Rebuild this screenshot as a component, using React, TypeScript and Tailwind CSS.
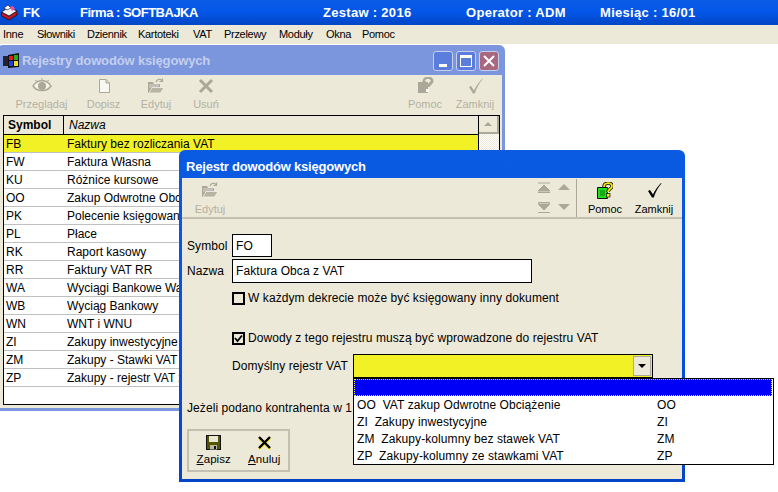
import { ReactNode } from "react";

const ROWS = [
  ["FB", "Faktury bez rozliczania VAT"],
  ["FW", "Faktura Własna"],
  ["KU", "Różnice kursowe"],
  ["OO", "Zakup Odwrotne Obciążenie"],
  ["PK", "Polecenie księgowania"],
  ["PL", "Płace"],
  ["RK", "Raport kasowy"],
  ["RR", "Faktury VAT RR"],
  ["WA", "Wyciągi Bankowe Walutowe"],
  ["WB", "Wyciąg Bankowy"],
  ["WN", "WNT i WNU"],
  ["ZI", "Zakupy inwestycyjne"],
  ["ZM", "Zakupy - Stawki VAT"],
  ["ZP", "Zakupy - rejestr VAT z"],
];

const MENU = ["Inne", "Słowniki", "Dziennik", "Kartoteki", "VAT", "Przelewy", "Moduły", "Okna", "Pomoc"];

const OPTIONS = [
  ["OO  VAT zakup Odwrotne Obciążenie", "OO"],
  ["ZI  Zakupy inwestycyjne", "ZI"],
  ["ZM  Zakupy-kolumny bez stawek VAT", "ZM"],
  ["ZP  Zakupy-kolumny ze stawkami VAT", "ZP"],
];

function EyeIcon() {
  return (
    <svg width="20" height="18" viewBox="0 0 20 18">
      <path d="M1 9 C5 2 15 2 19 9 C15 15 5 15 1 9Z" fill="#f5f3ea" stroke="#aca899" strokeWidth="1.5" />
      <circle cx="10" cy="9" r="4" fill="#aca899" />
      <path d="M3 3 L6 5 M10 1 V3 M17 3 L14 5" stroke="#aca899" />
    </svg>
  );
}

function PageIcon() {
  return (
    <svg width="14" height="16" viewBox="0 0 14 16">
      <path d="M2.5 1.5 H9 L12.5 5 V14.5 H2.5Z M9 1.5 V5 H12.5" fill="#f8f7f1" stroke="#aca899" />
    </svg>
  );
}

function FolderIcon() {
  return (
    <svg width="18" height="16" viewBox="0 0 18 16">
      <path d="M1 4 H6 L7 6 H13 V15 H1Z" fill="#aca899" />
      <path d="M2 7 H12 M2 9 H12" stroke="#f8f7f1" strokeWidth="0.6" />
      <path d="M2 15 L5 9.5 H17 L13.5 15Z" fill="#b8b4a4" stroke="#f8f7f1" strokeWidth="0.7" />
      <path d="M9 4 C10 1 13 0.5 15 2.5 M15.5 0.5 V3.5 H12.5" fill="none" stroke="#aca899" strokeWidth="1.2" />
    </svg>
  );
}

function CrossIcon({ color }: { color: string }) {
  return (
    <svg width="16" height="16" viewBox="0 0 16 16">
      <path d="M2 2 L14 14 M14 2 L2 14" stroke={color} strokeWidth="3" />
    </svg>
  );
}

function HelpDisabled() {
  return (
    <svg width="17" height="17" viewBox="0 0 17 17">
      <path d="M1 5 H11 V16 H1Z" fill="#aca899" />
      <path d="M7 5 C7 0 15 0 15 4 C15 7 11 7 11 10" fill="none" stroke="#aca899" strokeWidth="3" />
      <path d="M8 4 C9 2 13 2 13.5 4" fill="none" stroke="#f8f7f1" />
      <rect x="9" y="12" width="3" height="3" fill="#f8f7f1" />
    </svg>
  );
}

function HelpIcon() {
  return (
    <svg width="16" height="17" viewBox="0 0 16 17">
      <path d="M0.5 5.5 H10.5 V16.5 H0.5Z" fill="#22dd22" stroke="#111" />
      <path d="M3 9 H8 M3 11 H8 M3 13 H8" stroke="#0a7a0a" />
      <path d="M7 5 C7 0 15 0 15 4 C15 7 11 7 11 10" fill="none" stroke="#111" strokeWidth="3.4" />
      <path d="M7 5 C7 0 15 0 15 4 C15 7 11 7 11 10" fill="none" stroke="#f6e80c" strokeWidth="1.8" />
      <rect x="9.5" y="11.5" width="3.5" height="3.5" fill="#f6e80c" stroke="#111" strokeWidth="0.7" />
    </svg>
  );
}

function CheckMark({ color }: { color: string }) {
  return (
    <svg width="15" height="16" viewBox="0 0 15 16">
      <path d="M1 9 L3 8 L6 12.5 C8 8 11 4 14 1 L14.5 1.5 C11 5.5 8.5 10 6.8 15.5 H5 Z" fill={color} />
    </svg>
  );
}

function SaveIcon() {
  return (
    <svg width="15" height="15" viewBox="0 0 15 15">
      <rect x="0.5" y="0.5" width="14" height="14" fill="#555500" stroke="#111" />
      <rect x="3" y="1" width="9" height="6" fill="#e8e8d8" />
      <rect x="4" y="10" width="7" height="4.5" fill="#b8b8a8" />
      <rect x="8" y="11" width="2" height="3" fill="#111" />
    </svg>
  );
}

function ToolButton({ icon, label, disabled, width }: { icon: ReactNode; label: string; disabled?: boolean; width: string }) {
  return (
    <div className={`flex flex-col items-center text-[11px] ${width} ${disabled ? "text-[#b4b1a2]" : "text-black"}`}>
      <div className="flex h-[21px] items-center justify-center">{icon}</div>
      <span className="mt-[2px] leading-[13px]">{label}</span>
    </div>
  );
}

function CheckBox({ label, checked }: { label: string; checked?: boolean }) {
  return (
    <div className="flex items-center gap-[3px]">
      <div className="flex h-[13px] w-[13px] items-center justify-center border-2 border-black bg-[#ece9d8]">
        {checked && (
          <svg width="9" height="9" viewBox="0 0 9 9">
            <path d="M1 4 L3.5 7 L8 1.5" fill="none" stroke="#000" strokeWidth="1.8" />
          </svg>
        )}
      </div>
      <span>{label}</span>
    </div>
  );
}

function RegistersWindow() {
  return (
    <div className="absolute left-[-3px] top-[45px] flex h-[366px] w-[508px] flex-col rounded-t-[6px] bg-[#7b96dd] px-[3px] pb-[3px]">
      <div className="flex h-[30px] shrink-0 items-center pl-[3px] pr-[3px] pt-[2px]">
        <svg width="17" height="16" viewBox="0 0 17 16" className="mr-[2px] shrink-0">
          <rect x="0" y="3" width="5" height="10" fill="#223" />
          <path d="M5 2 L16 0 V14 L5 15Z" fill="#111" />
          <rect x="6" y="3" width="4" height="4" fill="#e02020" />
          <rect x="11" y="2" width="4" height="5" fill="#20b020" />
          <rect x="6" y="8" width="4" height="5" fill="#2040e0" />
          <rect x="11" y="8" width="4" height="5" fill="#f0e020" />
        </svg>
        <span className="text-[13px] font-bold tracking-[-0.15px] text-[#c3cfee]">Rejestry dowodów księgowych</span>
        <div className="ml-auto flex gap-[3px]">
          <div className="flex h-[20px] w-[20px] items-end rounded-[3px] border border-[#c5d0ee] bg-[#5b7ddc] pb-[3px] pl-[5px]">
            <div className="h-[3px] w-[8px] bg-white" />
          </div>
          <div className="flex h-[20px] w-[20px] items-center justify-center rounded-[3px] border border-[#c5d0ee] bg-[#5b7ddc]">
            <div className="h-[12px] w-[12px] border border-t-[3px] border-white" />
          </div>
          <div className="flex h-[20px] w-[20px] items-center justify-center rounded-[3px] border border-[#c5d0ee] bg-[#a8687f]">
            <svg width="12" height="12" viewBox="0 0 12 12">
              <path d="M1 1 L11 11 M11 1 L1 11" stroke="#fff" strokeWidth="2" />
            </svg>
          </div>
        </div>
      </div>
      <div className="flex min-h-0 flex-1 flex-col bg-[#ece9d8] pb-[3px] pl-[3px] pr-[2px]">
        <div className="flex h-[40px] shrink-0 justify-between">
          <div className="flex pl-[5px]">
            <ToolButton icon={<EyeIcon />} label="Przeglądaj" disabled width="w-[67px]" />
            <ToolButton icon={<PageIcon />} label="Dopisz" disabled width="w-[57px]" />
            <ToolButton icon={<FolderIcon />} label="Edytuj" disabled width="w-[48px]" />
            <ToolButton icon={<CrossIcon color="#aca899" />} label="Usuń" disabled width="w-[52px]" />
          </div>
          <div className="flex">
            <ToolButton icon={<HelpDisabled />} label="Pomoc" disabled width="w-[50px]" />
            <ToolButton icon={<CheckMark color="#aca899" />} label="Zamknij" disabled width="w-[50px]" />
          </div>
        </div>
        <div className="flex min-h-0 flex-1 border border-black bg-white">
          <div className="min-w-0 flex-1">
            <div className="flex h-[19px] border-b border-black bg-[#ece9d8]">
              <div className="flex w-[60px] items-center border-r border-black pl-[4px] font-bold">Symbol</div>
              <div className="flex items-center pl-[5px] italic">Nazwa</div>
            </div>
            {ROWS.map(([symbol, name], i) => (
              <div
                key={symbol}
                className={`flex h-[18px] items-center border-b border-[#c0c0c0] ${i === 0 ? "bg-[#f1f126]" : "bg-white"}`}
              >
                <div className="w-[60px] pl-[2px]">{symbol}</div>
                {/* reszta wiersza jest pod oknem dialogu */}
                <div className={`ml-[3px] whitespace-nowrap ${i === 0 ? "" : "w-[112px] overflow-hidden"}`}>{name}</div>
              </div>
            ))}
          </div>
          <div className="flex w-[21px] shrink-0 flex-col border-l border-black bg-[repeating-conic-gradient(#ece9d8_0_25%,#fff_0_50%)] bg-[length:2px_2px]">
            <div className="flex h-[18px] items-center justify-center border-b-2 border-r-2 border-[#aca899] bg-[#ece9d8]">
              <div className="h-0 w-0 border-x-[4px] border-b-[4px] border-x-transparent border-b-[#aca899]" />
            </div>
          </div>
        </div>
      </div>
    </div>
  );
}

function TinyArrows() {
  return (
    <div className="grid grid-cols-2 gap-x-[8px] gap-y-[9px]">
      <svg width="12" height="11" viewBox="0 0 12 11">
        <path d="M0 1 H12 M6 3 L12 9 H0Z M0 10.5 H12" stroke="#aca899" fill="#aca899" />
      </svg>
      <svg width="12" height="11" viewBox="0 0 12 11">
        <path d="M6 2 L12 8 H0Z" fill="#aca899" />
      </svg>
      <svg width="12" height="11" viewBox="0 0 12 11">
        <path d="M0 0.5 H12 M0 2 H12 L6 8Z M0 10.5 H12" stroke="#aca899" fill="#aca899" />
      </svg>
      <svg width="12" height="11" viewBox="0 0 12 11">
        <path d="M0 2 H12 L6 8Z" fill="#aca899" />
      </svg>
    </div>
  );
}

function RegisterDialog() {
  return (
    <div className="absolute left-[179px] top-[150px] flex h-[332px] w-[506px] flex-col rounded-t-[6px] bg-[linear-gradient(to_bottom,#0a5be0,#0550ea_55%,#0345c8)] px-[3px] pb-[3px]">
      <div className="flex h-[28px] shrink-0 items-center pl-[4px] pt-[6px]">
        <span className="text-[13px] font-bold tracking-[-0.2px] text-white">Rejestr dowodów księgowych</span>
      </div>
      <div className="flex flex-1 flex-col bg-[#ece9d8]">
        <div className="flex h-[41px] shrink-0 items-center justify-between border-b-2 border-[#c4c1b2]">
          <ToolButton icon={<FolderIcon />} label="Edytuj" disabled width="w-[56px]" />
          <div className="flex items-center">
            <TinyArrows />
            <div className="ml-[6px] mr-[5px] h-[38px] w-[1px] bg-[#aca899]" />
            <ToolButton icon={<HelpIcon />} label="Pomoc" width="w-[46px]" />
            <ToolButton icon={<CheckMark color="#000" />} label="Zamknij" width="w-[52px]" />
            <div className="w-[2px]" />
          </div>
        </div>
        <div className="flex flex-1 flex-col pl-[5px] pt-[15px] tracking-[0.08px]">
          <div className="flex items-center">
            <span className="w-[45px]">Symbol</span>
            <div className="flex h-[23px] w-[40px] items-center border border-black bg-white pl-[3px]">FO</div>
          </div>
          <div className="mt-[2px] flex items-center">
            <span className="w-[45px]">Nazwa</span>
            <div className="flex h-[24px] w-[300px] items-center border border-black bg-white pl-[3px]">Faktura Obca z VAT</div>
          </div>
          <div className="ml-[45px] mt-[6px]">
            <CheckBox label="W każdym dekrecie może być księgowany inny dokument" />
          </div>
          <div className="ml-[45px] mt-[22px]">
            <CheckBox checked label="Dowody z tego rejestru muszą być wprowadzone do rejestru VAT" />
          </div>
          <div className="relative mt-[7px] flex items-center">
            <span className="ml-[45px] w-[121px]">Domyślny rejestr VAT</span>
            <div className="flex h-[24px] w-[300px] border border-black bg-[#f1f126] p-[1px]">
              <div className="flex-1" />
              <div className="flex w-[18px] items-center justify-center border border-[#aca899] bg-[#ece9d8]">
                <div className="h-0 w-0 border-x-[4px] border-t-[4px] border-x-transparent border-t-black" />
              </div>
            </div>
            {/* rozwinieta lista wychodzi poza okno */}
            <div className="absolute left-[166px] top-[24px] z-10 w-[421px] border border-black bg-white">
              <div className="mr-[1px] h-[17px] border border-dotted border-[#f1f126] bg-[#0000f6]" />
              {OPTIONS.map(([label, code]) => (
                <div key={code} className="flex h-[17px] items-center pl-[3px]">
                  <span className="w-[300px] whitespace-pre">{label}</span>
                  <span>{code}</span>
                </div>
              ))}
            </div>
          </div>
          <div className="mt-[21px]">Jeżeli podano kontrahenta w 1</div>
          <div className="mt-[12px] flex h-[43px] w-[103px] items-center justify-center gap-[2px] border-2 border-[#c4c1b2] text-[11.5px]">
            <div className="flex w-[50px] flex-col items-center">
              <SaveIcon />
              <span className="mt-[3px] leading-[13px]">
                <u>Z</u>apisz
              </span>
            </div>
            <div className="flex w-[48px] flex-col items-center">
              <svg width="15" height="15" viewBox="0 0 15 15">
                <path d="M2 3 L13 14 M13 3 L2 14" stroke="#f1e61a" strokeWidth="2.6" />
                <path d="M2 2 L13 13 M13 2 L2 13" stroke="#000" strokeWidth="2.4" />
              </svg>
              <span className="mt-[3px] leading-[13px]">
                <u>A</u>nuluj
              </span>
            </div>
          </div>
        </div>
      </div>
    </div>
  );
}

export default function App() {
  return (
    <div className="relative h-[492px] w-[778px] overflow-hidden bg-white font-['Liberation_Sans',sans-serif] text-[12px] text-black">
      <div className="flex h-[25px] items-center bg-[linear-gradient(to_bottom,#0a5ce6,#0355e8_50%,#0246c4)] pl-[1px] text-[13px] font-bold tracking-[0.3px] text-white">
        <svg width="17" height="17" viewBox="0 0 17 17" className="shrink-0">
          <path d="M0.5 8 L8 12 L16 7 V11 L8 16 L0.5 12Z" fill="#c01828" stroke="#111" strokeWidth="0.8" />
          <path d="M0.5 8 L8 3 L16 7 L8 12Z" fill="#f4f0f4" stroke="#111" strokeWidth="0.8" />
          <path d="M3 4 L7 1 L10 4 L6 6Z" fill="#fff" stroke="#111" strokeWidth="0.6" />
          <path d="M9 3 L12 2 L14 5 L11 7Z" fill="#f050a0" />
        </svg>
        <span className="ml-[5px] w-[57px] tracking-[-0.2px]">FK</span>
        <span className="w-[243px] tracking-[-0.5px]">Firma : SOFTBAJKA</span>
        <span className="w-[143px]">Zestaw : 2016</span>
        <span className="w-[134px]">Operator : ADM</span>
        <span>Miesiąc : 16/01</span>
      </div>
      <div className="grid h-[19px] grid-cols-[34px_50px_51px_55px_31px_55px_47px_36px_auto] items-center bg-[#ece9d8] pl-[3px] text-[11px] tracking-[-0.3px]">
        {MENU.map((item) => (
          <span key={item}>{item}</span>
        ))}
      </div>
      <RegistersWindow />
      <RegisterDialog />
    </div>
  );
}
